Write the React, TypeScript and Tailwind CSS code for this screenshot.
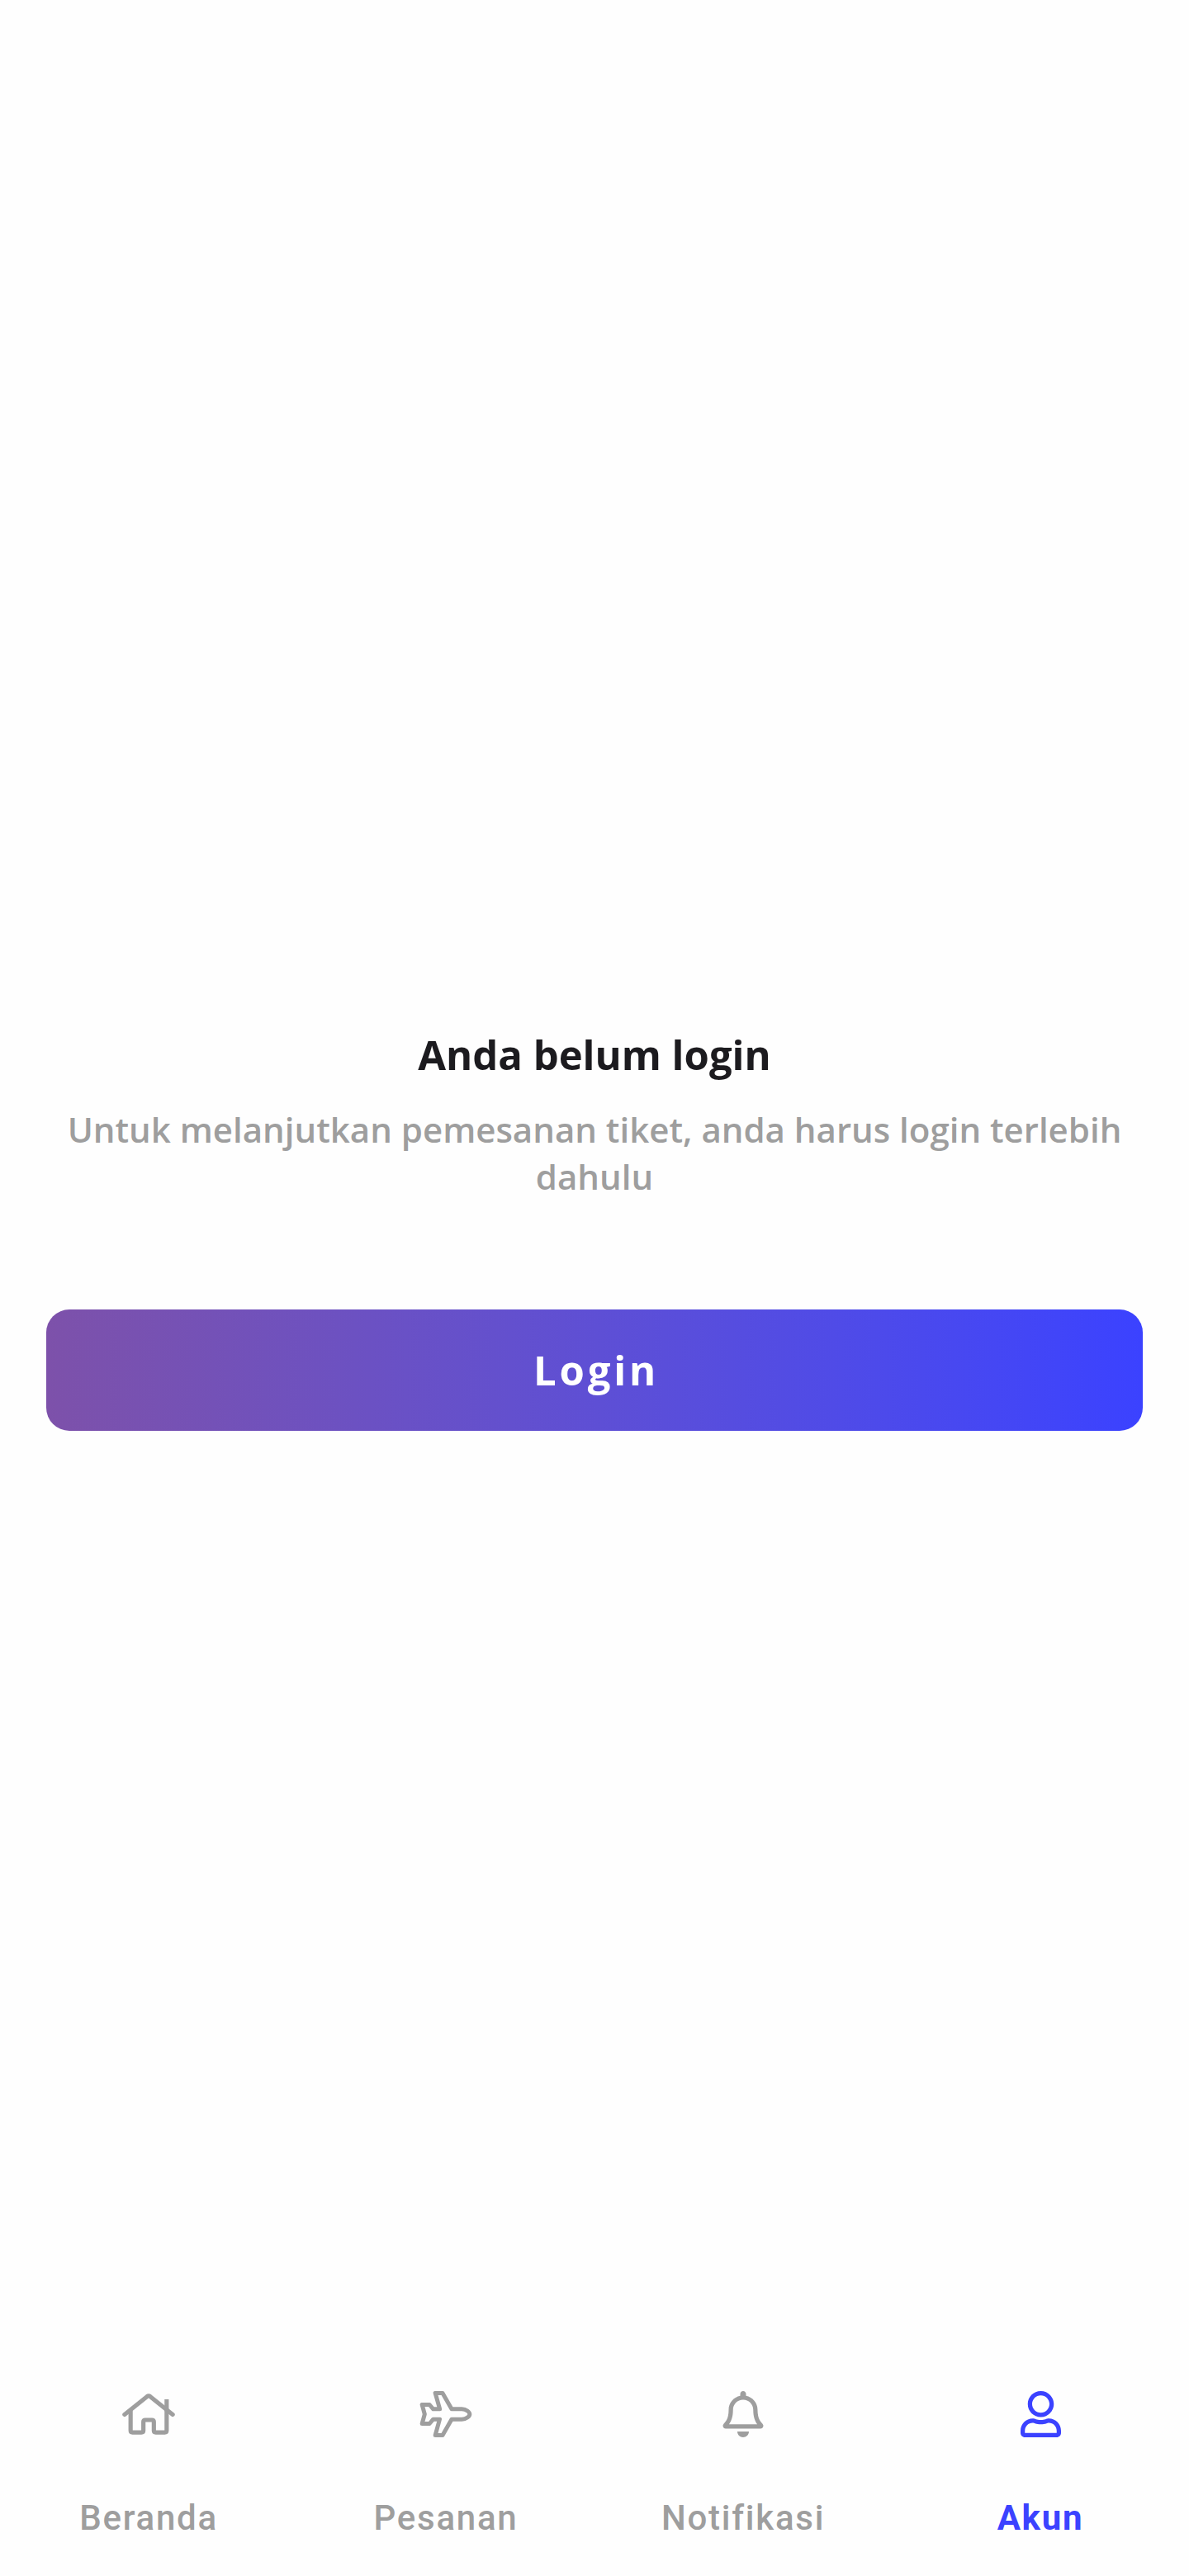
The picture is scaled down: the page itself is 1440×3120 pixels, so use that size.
import { FaRegBell } from "react-icons/fa";
import type { ReactNode } from "react";

function HomeIcon() {
  return (
    <svg viewBox="0 0 300 300" className="-mt-2 size-[100px] shrink-0" fill="none" stroke="currentColor" strokeWidth="15.5" strokeLinejoin="round">
      <path d="M62.5 163.5 144 98q6-4.500 12 0l81.500 65.500" strokeLinecap="round" />
      <path d="M84.500 148v73.500q0 7 7 7H124q7 0 7-7V190q0-7 7-7h24q7 0 7 7v31.500q0 7 7 7h32.500q7 0 7-7V148" />
      <path d="M215.500 151v-43" />
    </svg>
  );
}

function PlaneIcon() {
  return (
    <svg viewBox="0 0 300 300" className="-mt-2 size-[100px] shrink-0" fill="none" stroke="currentColor" strokeWidth="15" strokeLinejoin="round">
      <path d="M111.500 85.500H138L171 143.500h37C224 143.500 236.500 154 236.500 162S224 180.500 208 180.500H171L138 238.500H111.500L127.500 180.500H104L90.500 196.500H63.500L73 162 63.500 127.500H90.500L104 143.500H128Z" />
    </svg>
  );
}

function UserIcon() {
  return (
    <svg viewBox="0 0 448 512" className="h-14 w-[49px]" fill="currentColor">
      <path d="M313.600 304c-28.700 0-42.500 16-89.600 16-47.100 0-60.800-16-89.600-16C60.200 304 0 364.200 0 438.400V464c0 26.500 21.500 48 48 48h352c26.500 0 48-21.500 48-48v-25.600c0-74.200-60.200-134.400-134.400-134.400zM400 464H48v-25.600c0-47.600 38.800-86.400 86.400-86.400 14.600 0 38.300 16 89.600 16 51.700 0 74.900-16 89.600-16 47.600 0 86.400 38.800 86.400 86.400V464zM224 288c79.500 0 144-64.500 144-144S303.500 0 224 0 80 64.500 80 144s64.500 144 144 144zm0-240c52.900 0 96 43.100 96 96s-43.100 96-96 96-96-43.100-96-96 43.100-96 96-96z" />
    </svg>
  );
}

function Tab({ label, active = false, children }: { label: string; active?: boolean; children: ReactNode }) {
  return (
    <button className={active ? "flex flex-1 flex-col items-center font-bold text-[#3b42ff]" : "flex flex-1 flex-col items-center font-medium text-[#9e9e9e]"}>
      <span className="flex h-[68px] items-center justify-center text-[56px]">{children}</span>
      <span className="mt-16 text-[42px] leading-[56px] tracking-[1.75px]">{label}</span>
    </button>
  );
}

export default function App() {
  return (
    <div className="flex h-[3120px] w-[1440px] flex-col bg-[#fefefe] font-['Open_Sans',sans-serif]">
      <main className="flex flex-col px-14 pt-[1242px] text-center">
        <h1 className="text-[49px] font-bold leading-[70px] text-[#1c1b1f]">Anda belum login</h1>
        <p className="mt-[27px] text-[42px] font-semibold leading-[57px] text-[#9e9e9e]">Untuk melanjutkan pemesanan tiket, anda harus login terlebih dahulu</p>
        <button className="mt-[133px] h-[147px] rounded-[28px] bg-linear-to-r from-[#7d51aa] to-[#3b42ff] pl-1 text-[49px] font-bold tracking-[3.8px] text-white">Login</button>
      </main>
      <nav className="mt-auto flex h-[230px] font-[Roboto,sans-serif]">
        <Tab label="Beranda"><HomeIcon /></Tab>
        <Tab label="Pesanan"><PlaneIcon /></Tab>
        <Tab label="Notifikasi"><FaRegBell /></Tab>
        <Tab label="Akun" active><UserIcon /></Tab>
      </nav>
    </div>
  );
}
